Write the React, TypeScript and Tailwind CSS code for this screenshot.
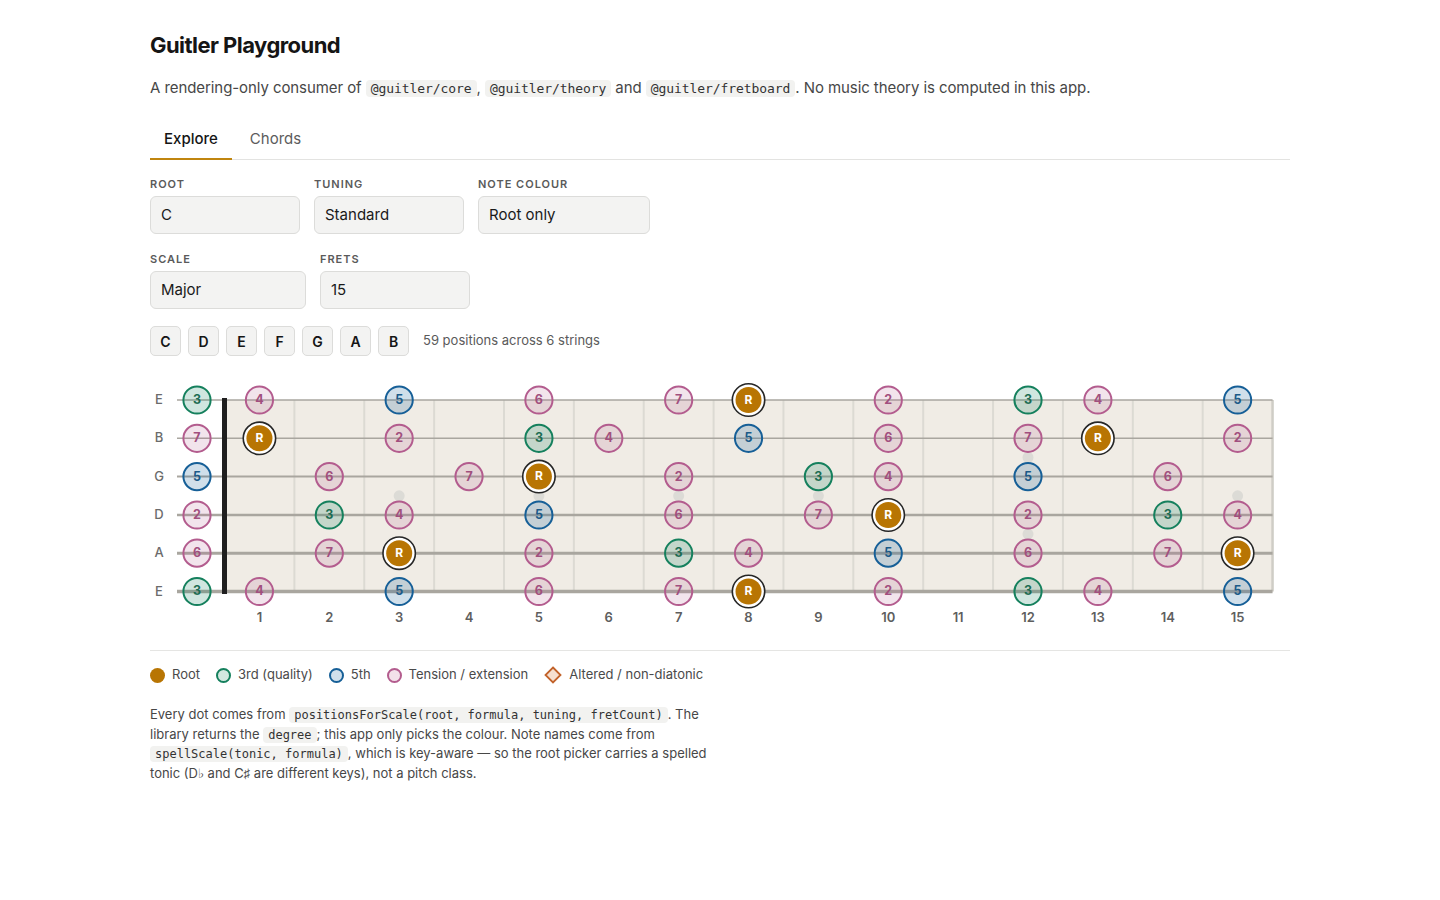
import React from "react";

type Deg = "R" | "2" | "3" | "4" | "5" | "6" | "7";

const NOTES = ["C", "C#", "D", "D#", "E", "F", "F#", "G", "G#", "A", "A#", "B"];
const SCALE: Record<string, Deg> = { C: "R", D: "2", E: "3", F: "4", G: "5", A: "6", B: "7" };
// high E at the top, low E at the bottom
const STRINGS = [
  { name: "E", open: 4, w: 1.5 },
  { name: "B", open: 11, w: 1.5 },
  { name: "G", open: 7, w: 2 },
  { name: "D", open: 2, w: 2.5 },
  { name: "A", open: 9, w: 3 },
  { name: "E", open: 4, w: 3.5 },
];
const FRETS = 15;
const NUT_X = 74.5;
const FRET_W = 69.87;
const STRING_Y = [27, 65.3, 103.6, 142, 180.2, 218.5];
const OPEN_X = 47;

const STYLE: Record<string, { stroke: string; fill: string; text: string }> = {
  tension: { stroke: "#b35c8e", fill: "rgba(179,92,142,0.17)", text: "#a14f7e" },
  third: { stroke: "#15805d", fill: "rgba(21,128,93,0.2)", text: "#1b6c52" },
  fifth: { stroke: "#165f97", fill: "rgba(22,95,151,0.2)", text: "#1b5a88" },
};

function fretX(f: number) {
  return f === 0 ? OPEN_X : NUT_X + (f - 0.5) * FRET_W;
}

function Dot({ x, y, deg }: { x: number; y: number; deg: Deg }) {
  if (deg === "R") {
    return (
      <g>
        <circle cx={x} cy={y} r={16.2} fill="#ffffff" stroke="#262626" strokeWidth={1.6} />
        <circle cx={x} cy={y} r={13} fill="#b87503" />
        <text x={x} y={y + 0.5} textAnchor="middle" dominantBaseline="middle" fontSize={12} fontWeight={700} fill="#ffffff">
          R
        </text>
      </g>
    );
  }
  const kind = deg === "3" ? "third" : deg === "5" ? "fifth" : "tension";
  const s = STYLE[kind];
  return (
    <g>
      <circle cx={x} cy={y} r={13.6} fill={s.fill} stroke={s.stroke} strokeWidth={2} />
      <text x={x} y={y + 0.5} textAnchor="middle" dominantBaseline="middle" fontSize={12.5} fontWeight={700} fill={s.text}>
        {deg}
      </text>
    </g>
  );
}

function Fretboard() {
  const boardEnd = NUT_X + FRETS * FRET_W;
  const dots: { x: number; y: number; deg: Deg; key: string }[] = [];
  STRINGS.forEach((s, si) => {
    for (let f = 0; f <= FRETS; f++) {
      const n = NOTES[(s.open + f) % 12];
      const deg = SCALE[n];
      if (deg) dots.push({ x: fretX(f), y: STRING_Y[si], deg, key: `${si}-${f}` });
    }
  });
  const midGD = (STRING_Y[2] + STRING_Y[3]) / 2;
  const inlays = [3, 5, 7, 9, 15].map((f) => ({ x: fretX(f), y: midGD }));
  inlays.push({ x: fretX(12), y: (STRING_Y[1] + STRING_Y[2]) / 2 });
  inlays.push({ x: fretX(12), y: (STRING_Y[3] + STRING_Y[4]) / 2 });

  return (
    <svg width={1140} height={260} viewBox="0 0 1140 260" className="block" style={{ fontFamily: "Inter, 'Noto Sans', sans-serif" }}>
      <rect x={NUT_X} y={STRING_Y[0]} width={boardEnd - NUT_X} height={STRING_Y[5] - STRING_Y[0]} fill="#f0ece5" />
      {Array.from({ length: FRETS }, (_, i) => i + 1).map((f) => (
        <line
          key={f}
          x1={NUT_X + f * FRET_W}
          x2={NUT_X + f * FRET_W}
          y1={STRING_Y[0]}
          y2={STRING_Y[5]}
          stroke={f === FRETS ? "#cfcdc6" : "#dcdad3"}
          strokeWidth={f === FRETS ? 2.5 : 2}
        />
      ))}
      {inlays.map((d, i) => (
        <circle key={i} cx={d.x} cy={d.y} r={5.5} fill="#dcdbd6" />
      ))}
      {STRINGS.map((s, i) => (
        <line key={i} x1={27} x2={boardEnd} y1={STRING_Y[i]} y2={STRING_Y[i]} stroke="#a9a69f" strokeWidth={s.w} />
      ))}
      <rect x={72} y={25} width={5} height={196} fill="#1f1f1f" />
      {STRINGS.map((s, i) => (
        <text key={i} x={9} y={STRING_Y[i] + 0.5} textAnchor="middle" dominantBaseline="middle" fontSize={13} fontWeight={500} fill="#6b6b6b">
          {s.name}
        </text>
      ))}
      {dots.map((d) => (
        <Dot key={d.key} x={d.x} y={d.y} deg={d.deg} />
      ))}
      {Array.from({ length: FRETS }, (_, i) => i + 1).map((f) => (
        <text key={f} x={fretX(f)} y={245.5} textAnchor="middle" dominantBaseline="middle" fontSize={13} fontWeight={600} fill="#5e5e5e">
          {f}
        </text>
      ))}
    </svg>
  );
}

function Code({ children, size = "text-[13px]" }: { children: React.ReactNode; size?: string }) {
  return (
    <code className={`${size} rounded-[4px] bg-[#f2f2f0] px-[5px] py-[1px] leading-none text-[#333] [font-family:'DejaVu_Sans_Mono',monospace]`}>
      {children}
    </code>
  );
}

function Field({ label, value, w }: { label: string; value: string; w: string }) {
  return (
    <div className="flex flex-col">
      <div className="mb-[5px] text-[11px] font-semibold leading-[14px] tracking-[0.09em] text-[#5a5a5a]">{label}</div>
      <div className={`${w} flex h-[38px] items-center rounded-[6px] border border-[#dcdcda] bg-[#f3f3f2] px-[10px] text-[15px] text-[#1a1a1a]`}>
        {value}
      </div>
    </div>
  );
}

function LegendItem({ mark, label }: { mark: React.ReactNode; label: string }) {
  return (
    <div className="flex items-center gap-[7px]">
      {mark}
      <span>{label}</span>
    </div>
  );
}

export default function App() {
  return (
    <div className="min-h-[900px] bg-white text-[#1a1a1a] [font-family:Inter,'Noto_Sans',sans-serif]">
      <div className="ml-[150px] w-[1140px] pt-[31px]">
        <h1 className="text-[22px] font-bold leading-[28px] tracking-[-0.025em] text-[#151515]">Guitler Playground</h1>
        <p className="mt-[18px] text-[15px] leading-[22px] tracking-[-0.005em] text-[#474747]">
          A rendering-only consumer of <Code>@guitler/core</Code>, <Code>@guitler/theory</Code> and{" "}
          <Code>@guitler/fretboard</Code>. No music theory is computed in this app.
        </p>

        <div className="mt-[19px] flex border-b border-[#e3e3e1]">
          <button className="-mb-px border-b-2 border-[#c0850f] px-[14px] pb-[8px] pt-[10px] text-[15px] font-medium leading-[22px] text-[#151515]">
            Explore
          </button>
          <button className="ml-[4px] -mb-px border-b-2 border-transparent px-[14px] pb-[8px] pt-[10px] text-[15px] leading-[22px] text-[#5c5c5c]">
            Chords
          </button>
        </div>

        <div className="mt-[17px] flex gap-[14px]">
          <Field label="ROOT" value="C" w="w-[150px]" />
          <Field label="TUNING" value="Standard" w="w-[150px]" />
          <Field label="NOTE COLOUR" value="Root only" w="w-[172px]" />
        </div>
        <div className="mt-[18px] flex gap-[14px]">
          <Field label="SCALE" value="Major" w="w-[156px]" />
          <Field label="FRETS" value="15" w="w-[150px]" />
        </div>

        <div className="mt-[17px] flex items-center gap-[7px]">
          {["C", "D", "E", "F", "G", "A", "B"].map((n) => (
            <button
              key={n}
              className="flex h-[30px] min-w-[31px] items-center justify-center rounded-[5px] border border-[#dcdcda] bg-[#f3f3f2] px-[9px] text-[14px] font-semibold text-[#151515]"
            >
              {n}
            </button>
          ))}
          <span className="ml-[7px] text-[13px] text-[#5a5a5a]">59 positions across 6 strings</span>
        </div>

        <div className="mt-[17px]">
          <Fretboard />
        </div>

        <div className="mt-[17px] border-t border-[#e5e5e3]" />

        <div className="mt-[14px] flex h-[20px] items-center gap-[16px] text-[13px] text-[#4a4a4a]">
          <LegendItem mark={<span className="h-[15px] w-[15px] rounded-full bg-[#b87503]" />} label="Root" />
          <LegendItem
            mark={<span className="h-[15px] w-[15px] rounded-full border-2 border-[#15805d] bg-[#d3e8e0]" />}
            label="3rd (quality)"
          />
          <LegendItem
            mark={<span className="h-[15px] w-[15px] rounded-full border-2 border-[#165f97] bg-[#d1e0ec]" />}
            label="5th"
          />
          <LegendItem
            mark={<span className="h-[15px] w-[15px] rounded-full border-2 border-[#b35c8e] bg-[#f3e1ea]" />}
            label="Tension / extension"
          />
          <LegendItem
            mark={
              <svg width="18" height="18" viewBox="0 0 18 18">
                <path d="M9 1.5 L16.5 9 L9 16.5 L1.5 9 Z" fill="#f6dfcf" stroke="#c2622a" strokeWidth="1.8" strokeLinejoin="miter" />
              </svg>
            }
            label="Altered / non-diatonic"
          />
        </div>

        <p className="mt-[20px] max-w-[560px] text-[13px] leading-[19.5px] text-[#474747]">
          Every dot comes from <Code size="text-[12px]">positionsForScale(root, formula, tuning, fretCount)</Code>. The
          library returns the <Code size="text-[12px]">degree</Code>; this app only picks the colour. Note names come from{" "}
          <Code size="text-[12px]">spellScale(tonic, formula)</Code>, which is key-aware — so the root picker carries a
          spelled tonic (D♭ and C♯ are different keys), not a pitch class.
        </p>
      </div>
    </div>
  );
}
